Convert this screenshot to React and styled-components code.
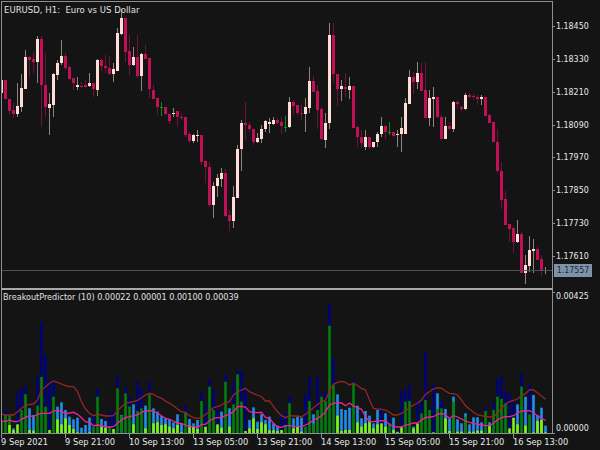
import React from 'react';
import styled, { createGlobalStyle } from 'styled-components';

const GlobalStyle = createGlobalStyle`
  html, body {
    margin: 0;
    padding: 0;
    background: #141414;
  }
`;

// page pixels: [top of body, bottom of body, wick top, wick bottom, kind]
const CANDLES = [
  [80,93,80,93,'u'],[80,99,80,99,'d'],[99,111,99,115,'d'],[110,114,103,118,'d'],[106,114,83,117,'u'],
  [88,107,74,112,'u'],[57,89,50,89,'u'],[57,60,56,77,'d'],[59,62,52,73,'d'],[39,62,36,83,'u'],
  [39,85,36,127,'d'],[85,107,53,117,'d'],[104,108,93,135,'u'],[74,105,73,117,'u'],[63,75,60,80,'u'],
  [56,63,40,65,'u'],[56,68,53,70,'d'],[67,79,65,80,'d'],[78,83,78,90,'d'],[85,87,77,90,'u'],
  [86,87,82,88,'d'],[85,87,80,88,'d'],[83,86,73,87,'u'],[83,89,83,97,'d'],[60,90,59,96,'u'],
  [60,66,59,71,'d'],[66,68,55,73,'d'],[68,74,56,75,'d'],[69,74,63,82,'u'],[33,71,28,71,'u'],
  [18,34,9,35,'u'],[18,52,18,62,'d'],[51,65,35,75,'d'],[57,65,47,66,'u'],[57,76,35,78,'d'],
  [54,76,53,91,'u'],[54,59,45,59,'d'],[58,89,58,98,'d'],[90,99,85,99,'d'],[98,107,98,115,'d'],
  [107,108,102,116,'g'],[107,114,107,115,'d'],[114,121,114,124,'d'],[113,114,108,117,'u'],[111,117,111,127,'d'],
  [117,118,113,120,'d'],[117,135,117,137,'d'],[134,141,132,143,'d'],[135,141,134,143,'u'],[135,136,130,142,'u'],
  [135,162,135,165,'d'],[161,167,160,183,'d'],[167,205,162,207,'d'],[186,205,182,218,'u'],[178,186,174,197,'u'],
  [173,179,168,187,'u'],[173,216,169,217,'d'],[215,221,210,231,'d'],[197,221,186,228,'u'],[149,198,145,198,'u'],
  [123,149,120,171,'u'],[123,125,102,140,'d'],[125,129,122,132,'d'],[129,142,129,145,'d'],[138,142,133,143,'u'],
  [129,139,125,143,'u'],[121,129,120,132,'u'],[122,124,118,133,'u'],[120,124,117,125,'u'],[120,123,118,124,'d'],
  [122,126,117,134,'d'],[127,128,116,132,'g'],[102,127,97,128,'u'],[102,106,100,115,'d'],[105,113,105,115,'d'],
  [113,114,105,120,'d'],[107,114,98,132,'u'],[81,108,67,113,'u'],[81,92,76,92,'d'],[91,110,85,129,'d'],
  [109,139,107,140,'d'],[123,140,113,148,'u'],[35,123,23,129,'u'],[35,74,23,83,'d'],[74,89,74,106,'d'],
  [86,89,80,101,'u'],[87,89,73,97,'d'],[86,90,77,99,'u'],[86,128,86,128,'d'],[127,137,126,147,'d'],
  [137,143,130,148,'d'],[137,147,130,150,'u'],[137,147,137,149,'d'],[142,147,142,148,'u'],[134,142,132,147,'u'],
  [126,134,117,137,'u'],[126,132,125,139,'d'],[132,133,122,135,'g'],[132,136,132,137,'d'],[134,135,130,147,'u'],
  [128,134,117,152,'u'],[103,134,98,134,'u'],[77,104,70,104,'u'],[77,82,72,94,'d'],[73,82,62,89,'u'],
  [73,91,63,91,'d'],[90,118,62,118,'d'],[98,118,90,126,'u'],[97,99,87,127,'u'],[97,117,97,118,'d'],
  [117,139,115,139,'d'],[126,139,117,139,'u'],[126,129,122,130,'d'],[102,129,101,132,'u'],[102,104,101,108,'d'],
  [107,109,106,111,'d'],[95,109,93,110,'u'],[95,97,93,98,'d'],[96,97,94,100,'d'],[97,99,95,105,'d'],
  [97,99,95,105,'u'],[97,116,97,116,'d'],[115,123,114,123,'d'],[122,142,122,142,'d'],[142,171,129,173,'d'],
  [171,200,162,209,'d'],[199,225,191,225,'d'],[224,229,224,242,'d'],[228,242,227,253,'d'],[234,242,220,243,'u'],
  [234,273,232,273,'d'],[265,273,255,284,'u'],[250,266,236,272,'u'],[249,251,239,273,'u'],[249,260,247,260,'d'],
  [259,271,255,276,'d'],[270,271,267,274,'u'],
];

// zoomed y (page y = 285 + z / 3): top colour, top, lower colour, split
const BARS = [
  'g410','n375g390','g392l420','b430l435','n322l418','n308g375','n305g328','b370l435','b390l437','n275g362',
  'n112g276','n210g365','n290l435','n290g335','b365l403','b352l418','b375l400','b395l420','b403l432','b398l442',
  'b428l445','b420l445','b398l442','n392g425','n312g335','b402l425','b408l428','n380g425','n380l432','n275g310',
  'b390g392','n305g325','n335g365','b358l418','n288g378','n312g370','b362l430','n288g328','b370l415','b380l412',
  'b393l420','b400l418','b402l425','b412l430','b388l420','b415l442','n360g382','b402l422','b415l425','b405l432',
  'n322g348','n362l425','n282g305','n312g375','n370l418','b380l428','n270g290','b370l425','n290g358','n255g268',
  'n258g350','n308l438','b405l430','b367l400','b410l432','b388l412','b405l418','b395l436','b415l436','b422l438',
  'n385l435','n385g420','n335g355','b400l430','b395l425','b398l440','n328g425','n275g348','b388g415','n275g375',
  'n325g335','n322g348','n55g122','n220g300','b328l392','b372l438','b375l435','b368l435','n285g295','b362l412',
  'b400l425','b378l415','b392l408','b415l430','b375l418','n375l415','b385l425','n400g415','b398l435','b440l442',
  'n318l425','n315g350','n300g348','b425l430','n345l415','n350g385','n198g345','n370g375','n298l442','b325g372',
  'n345g370','b372l400','b400l438','b335g350','b403l440','b415l440','b385g395','b418l440','b397l440','b397l437',
  'b412l437','n368g378','b412l420','n352g375','n283g335','n272g342','n318g355','n328l430','n352l398','b358l418',
  'n265g305','b335l422','n300g388','b330l442','b390l408','b368l405','b422l442',
];

const RED_LINE = [
  388,390,390,390,380,370,362,358,357,345,315,305,295,288,292,297,302,305,305,320,350,372,385,392,388,390,393,393,392,378,
  365,355,352,350,346,338,330,325,328,335,340,348,355,362,372,380,382,392,398,400,398,388,380,368,365,360,352,350,330,320,
  315,310,320,326,330,335,348,348,365,380,392,398,392,393,393,395,388,378,368,358,352,345,318,298,292,289,292,300,294,302,
  310,315,345,370,372,373,375,382,390,390,385,378,368,360,355,345,328,320,312,308,310,318,325,326,330,345,362,372,382,390,
  392,394,396,396,384,370,358,350,346,342,332,326,314,315,323,333,343,
];

const PINK_LINE = [
  408,410,405,410,410,403,397,392,395,388,385,385,385,378,376,378,386,384,382,388,398,410,412,422,420,422,426,426,425,415,
  405,398,395,392,390,382,378,377,378,385,392,400,403,408,415,415,420,425,425,428,418,418,408,400,398,398,392,388,380,365,
  364,366,380,382,383,382,398,400,415,426,427,422,422,424,425,425,420,415,405,400,392,380,360,355,353,354,362,354,363,368,
  373,395,410,410,408,407,408,418,425,426,426,420,418,414,414,405,398,396,395,388,385,390,400,392,396,402,408,412,415,418,
  420,422,422,415,405,398,395,395,392,384,378,378,377,383,392,400,406,
];

const PRICES = ['1.18450', '1.18330', '1.18210', '1.18090', '1.17970', '1.17850', '1.17730', '1.17610'];
const TIMES = ['9 Sep 2021', '9 Sep 21:00', '10 Sep 13:00', '13 Sep 05:00', '13 Sep 21:00', '14 Sep 13:00', '15 Sep 05:00', '15 Sep 21:00', '16 Sep 13:00'];

const BAR_COLORS = { n: '#00047c', b: '#1e8fee', g: '#067f06', l: '#7ff50a' };
const CANDLE_COLORS = {
  u: { body: '#ffdcd6', wick: '#8f8280' },
  d: { body: '#c20f56', wick: '#6e1238' },
  g: { body: '#0b9a0b', wick: '#0b8a0b' },
};

const cx = (n) => 1.5 + 4 * n;
const panelY = (z) => 285 + z / 3;

const Screen = styled.div`
  width: 600px;
  height: 450px;
  position: relative;
  overflow: hidden;
  background: #141414;
  padding: 1px 0 0 1px;
  box-sizing: border-box;
  display: grid;
  grid-template-columns: 552px 47px;
  grid-template-rows: 289px 144px 1fr;
  font-family: "DejaVu Sans Condensed", "DejaVu Sans", sans-serif;
  font-stretch: condensed;
  color: #e4e4e4;
`;

const Pane = styled.div`
  position: relative;
  box-sizing: border-box;
  border-left: 1px solid #8f8f8f;
  border-right: 1px solid #8f8f8f;
  border-top: ${(p) => (p.$lower ? 'none' : '1px solid #8f8f8f')};
  border-bottom: ${(p) => (p.$lower ? '1px solid #8f8f8f' : '2px solid #a9a9a9')};
`;

const Caption = styled.div`
  position: absolute;
  left: ${(p) => (p.$title ? 2 : 1)}px;
  top: ${(p) => p.$top}px;
  font-size: ${(p) => (p.$title ? 9.5 : 9)}px;
  line-height: 12px;
  white-space: pre;
  color: #e0e0e0;
`;

const Plot = styled.svg`
  display: block;
  width: 550px;
  height: 100%;
`;

const PriceAxis = styled.div`
  display: grid;
  grid-auto-rows: 32.86px;
  padding-top: 19px;
`;

const LowerAxis = styled.div`
  display: flex;
  flex-direction: column;
  justify-content: space-between;
`;

const AxisLabel = styled.div`
  position: relative;
  height: 12px;
  padding-left: 3px;
  font-size: 8.8px;
  line-height: 12px;
  color: #e8e8e8;

  &::before {
    content: '';
    position: absolute;
    left: 0;
    top: ${(p) => p.$tickTop ?? 6}px;
    width: 2px;
    height: 1px;
    background: #8f8f8f;
  }
`;

const CurrentPrice = styled.div`
  position: absolute;
  left: 554px;
  top: 264px;
  width: 38px;
  height: 13px;
  background: #7d93ab;
  color: #23282d;
  font-size: 8.8px;
  line-height: 13px;
  text-align: center;
`;

const TimeAxis = styled.div`
  grid-column: 1 / -1;
  display: grid;
  grid-template-columns: repeat(9, 64px);
`;

const TimeLabel = styled.div`
  position: relative;
  font-size: 9.2px;
  line-height: 12px;
  padding-top: 2px;
  white-space: nowrap;
  color: #e8e8e8;

  &::before {
    content: '';
    position: absolute;
    left: 0;
    top: 0;
    width: 1px;
    height: 4px;
    background: #8f8f8f;
  }
`;

function CandleChart() {
  return (
    <Plot viewBox="2 2 550 286" preserveAspectRatio="none" shapeRendering="crispEdges">
      {CANDLES.map(([top, bottom, hi, lo, kind], n) => {
        const c = CANDLE_COLORS[kind];
        const x = 1 + 4 * n;
        return (
          <g key={n}>
            <rect x={x} y={hi} width={1} height={lo - hi} fill={c.wick} />
            <rect x={x - 1} y={top} width={3} height={Math.max(bottom - top, 1)} fill={c.body} />
          </g>
        );
      })}
      <rect x="2" y="270" width="550" height="1" fill="#47525e" />
    </Plot>
  );
}

function IndicatorChart() {
  const line = (values) => values.map((z, n) => `${cx(n)},${panelY(z).toFixed(1)}`).join(' ');
  return (
    <Plot viewBox="2 290 550 143" preserveAspectRatio="none">
      {BARS.map((bar, n) => {
        const [, topKind, topZ, lowKind, lowZ] = bar.match(/^([a-z])(\d+)(?:([a-z])(\d+))?$/) || [];
        const x = 4 * n + 0.2;
        const top = panelY(+topZ);
        const mid = lowKind ? panelY(+lowZ) : top;
        return (
          <g key={n}>
            <rect x={x} y={top} width={2.6} height={433 - top} fill={BAR_COLORS[topKind]} />
            {lowKind && <rect x={x} y={mid} width={2.6} height={433 - mid} fill={BAR_COLORS[lowKind]} />}
          </g>
        );
      })}
      <polyline points={line(RED_LINE)} fill="none" stroke="#962626" strokeWidth="1.3" />
      <polyline points={line(PINK_LINE)} fill="none" stroke="#f0209a" strokeWidth="1.3" />
    </Plot>
  );
}

export default function App() {
  return (
    <Screen>
      <GlobalStyle />
      <Pane>
        <CandleChart />
        <Caption $top={2} $title>EURUSD, H1:  Euro vs US Dollar</Caption>
      </Pane>
      <PriceAxis>
        {PRICES.map((price) => (
          <AxisLabel key={price}>{price}</AxisLabel>
        ))}
      </PriceAxis>
      <Pane $lower>
        <IndicatorChart />
        <Caption $top={1}>BreakoutPredictor (10) 0.00022 0.00001 0.00100 0.00039</Caption>
      </Pane>
      <LowerAxis>
        <AxisLabel $tickTop={2}>0.00425</AxisLabel>
        <AxisLabel $tickTop={11}>0.00000</AxisLabel>
      </LowerAxis>
      <TimeAxis>
        {TIMES.map((time) => (
          <TimeLabel key={time}>{time}</TimeLabel>
        ))}
      </TimeAxis>
      <CurrentPrice>1.17557</CurrentPrice>
    </Screen>
  );
}
